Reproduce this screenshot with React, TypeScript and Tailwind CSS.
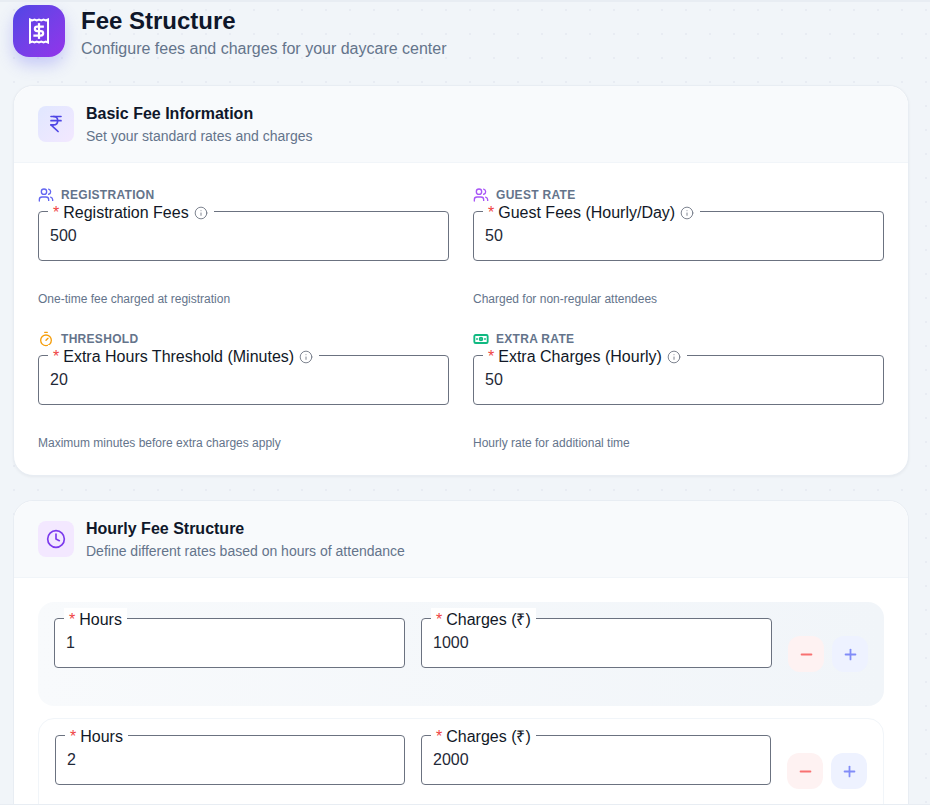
import React from "react";
import { Users, Timer, Banknote, IndianRupee, Clock, Info, Minus, Plus } from "lucide-react";

function Field({ label, value, info, w }: { label: string; value: string; info?: boolean; w?: string }) {
  return (
    <div className={`relative h-[50px] rounded-[4px] border border-[#6b7280] bg-white ${w ?? ""}`}>
      <div className="absolute left-[9px] top-[-11px] flex h-[20px] items-center bg-white px-[5px] pt-[4px] text-[16px] leading-[20px] text-[#111827]">
        <span className="mr-[4px] text-[#ef4444]">*</span>
        <span>{label}</span>
        {info && <Info className="ml-[5px] mr-[1px] h-[14px] w-[14px] text-[#6b7280]" strokeWidth={1.5} />}
      </div>
      <div className="px-[11px] pt-[14px] text-[16px] leading-[20px] text-[#1f2937]">{value}</div>
    </div>
  );
}

function Item({ icon, tag, label, value, help }: { icon: React.ReactNode; tag: string; label: string; value: string; help: string }) {
  return (
    <div className="h-[120px]">
      <div className="flex h-[16px] items-center gap-[7px] text-[12px] font-bold uppercase tracking-[0.3px] text-[#64748b]">
        <span className="flex h-[16px] w-[16px] items-center justify-center">{icon}</span>
        <span>{tag}</span>
      </div>
      <div className="mt-[8px]">
        <Field label={label} value={value} info />
      </div>
      <p className="mt-[31px] text-[12px] leading-[14px] text-[#64748b]">{help}</p>
    </div>
  );
}

function CardHead({ icon, title, sub }: { icon: React.ReactNode; title: string; sub: string }) {
  return (
    <div className="flex h-[77px] items-center gap-[12px] rounded-t-[20px] border-b border-[#f1f5f9] bg-[#f8fafc] px-[24px]">
      {icon}
      <div>
        <h2 className="text-[16px] font-bold leading-[24px] text-[#0f172a]">{title}</h2>
        <p className="text-[14px] leading-[20px] text-[#64748b]">{sub}</p>
      </div>
    </div>
  );
}

function Row({ hours, charges, filled }: { hours: string; charges: string; filled?: boolean }) {
  return (
    <div className={filled ? "flex h-[104px] items-center rounded-[16px] bg-gradient-to-r from-[#f8fafc] to-[#f1f5f9] px-[16px]" : "flex h-[106px] items-center rounded-[16px] border border-[#f1f5f9] bg-white px-[16px]"}>
      <div className="mb-[22px] flex flex-1 gap-[16px]">
        <Field label="Hours" value={hours} w="flex-1" />
        <Field label="Charges (₹)" value={charges} w="flex-1" />
      </div>
      <div className="ml-[16px] flex gap-[8px]">
        <button className="flex h-[36px] w-[36px] items-center justify-center rounded-[12px] bg-[#fef2f2] text-[#f87171]"><Minus className="h-[17px] w-[17px]" strokeWidth={2.5} /></button>
        <button className="flex h-[36px] w-[36px] items-center justify-center rounded-[12px] bg-[#eef2ff] text-[#818cf8]"><Plus className="h-[17px] w-[17px]" strokeWidth={2.5} /></button>
      </div>
    </div>
  );
}

function ReceiptDollar() {
  return (
    <svg width="22" height="26" viewBox="0 0 22 26" fill="none" stroke="currentColor" strokeWidth="2">
      <path d="M2 1.5 L4.25 2.5 L6.5 1.5 L8.75 2.5 L11 1.5 L13.25 2.5 L15.5 1.5 L17.75 2.5 L20 1.5 V24.5 L17.75 23.5 L15.5 24.5 L13.25 23.5 L11 24.5 L8.75 23.5 L6.5 24.5 L4.25 23.5 L2 24.5 Z" strokeLinejoin="miter" />
      <g transform="translate(2 4) scale(0.75)" strokeWidth="3" strokeLinecap="square">
        <path d="M12 3v18" />
        <path d="M17 6H9.5a3 3 0 0 0 0 6h5a3 3 0 0 1 0 6H6" />
      </g>
    </svg>
  );
}

export default function App() {
  return (
    <div className="h-[808px] overflow-hidden bg-white font-['Liberation_Sans',Arial,sans-serif]">
      <div className="h-[805px] overflow-hidden border-t-2 border-b border-[#e8edf3] bg-[#f1f5f9] bg-[radial-gradient(#e8ecf3_1px,transparent_1px)] bg-[length:24px_24px] bg-[position:2px_-4px] pl-[13px] pr-[21px]">
        <header className="flex h-[83px] items-start gap-[16px] pt-[3px]">
          <div className="flex h-[52px] w-[52px] items-center justify-center rounded-[16px] bg-gradient-to-br from-[#4f46e5] to-[#9333ea] text-white shadow-[0_8px_16px_rgba(99,102,241,0.3)]">
            <ReceiptDollar />
          </div>
          <div>
            <h1 className="text-[24px] font-bold leading-[32px] text-[#0f172a]">Fee Structure</h1>
            <p className="mt-[1px] text-[16px] leading-[22px] text-[#64748b]">Configure fees and charges for your daycare center</p>
          </div>
        </header>
        <section className="h-[391px] rounded-[20px] border border-[#e8edf3] bg-white shadow-[0_1px_3px_rgba(15,23,42,0.05)]">
          <CardHead
            title="Basic Fee Information"
            sub="Set your standard rates and charges"
            icon={<div className="flex h-[36px] w-[36px] items-center justify-center rounded-[8px] bg-gradient-to-br from-[#e0e7ff] to-[#f3e8ff] text-[#4f46e5]"><IndianRupee className="h-[20px] w-[20px]" /></div>}
          />
          <div className="grid grid-cols-2 gap-[24px] p-[24px]">
            <Item icon={<Users className="h-[16px] w-[16px] text-[#6366f1]" />} tag="Registration" label="Registration Fees" value="500" help="One-time fee charged at registration" />
            <Item icon={<Users className="h-[16px] w-[16px] text-[#a855f7]" />} tag="Guest Rate" label="Guest Fees (Hourly/Day)" value="50" help="Charged for non-regular attendees" />
            <Item icon={<Timer className="h-[16px] w-[16px] shrink-0 text-[#f59e0b]" />} tag="Threshold" label="Extra Hours Threshold (Minutes)" value="20" help="Maximum minutes before extra charges apply" />
            <Item icon={<Banknote className="h-[16px] w-[16px] shrink-0 text-[#10b981]" strokeWidth={2.8} />} tag="Extra Rate" label="Extra Charges (Hourly)" value="50" help="Hourly rate for additional time" />
          </div>
        </section>
        <section className="mt-[24px] rounded-[20px] border border-[#e8edf3] bg-white">
          <CardHead
            title="Hourly Fee Structure"
            sub="Define different rates based on hours of attendance"
            icon={<div className="flex h-[36px] w-[36px] items-center justify-center rounded-[8px] bg-[#f3e8ff] text-[#7c3aed]"><Clock className="h-[20px] w-[20px]" /></div>}
          />
          <div className="flex flex-col gap-[12px] p-[24px]">
            <Row hours="1" charges="1000" filled />
            <Row hours="2" charges="2000" />
          </div>
        </section>
      </div>
    </div>
  );
}
